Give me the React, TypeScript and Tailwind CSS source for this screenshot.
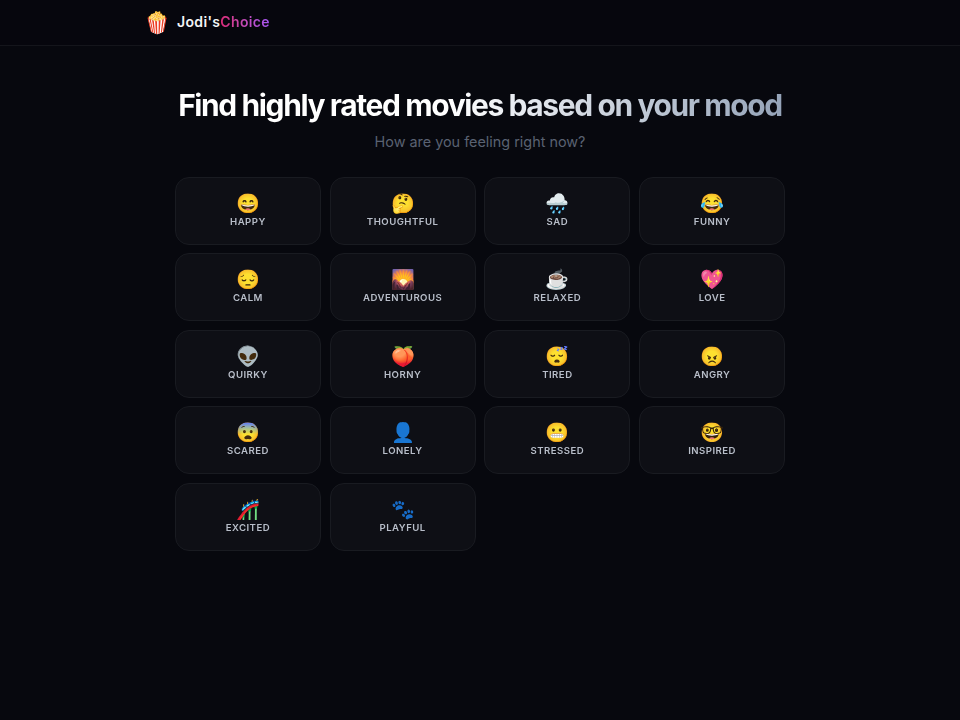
const moods = [
  { emoji: '😄', label: 'Happy' },
  { emoji: '🤔', label: 'Thoughtful' },
  { emoji: '🌧️', label: 'Sad' },
  { emoji: '😂', label: 'Funny' },
  { emoji: '😔', label: 'Calm' },
  { emoji: '🌄', label: 'Adventurous' },
  { emoji: '☕', label: 'Relaxed' },
  { emoji: '💖', label: 'Love' },
  { emoji: '👽', label: 'Quirky' },
  { emoji: '🍑', label: 'Horny' },
  { emoji: '😴', label: 'Tired' },
  { emoji: '😠', label: 'Angry' },
  { emoji: '😨', label: 'Scared' },
  { emoji: '👤', label: 'Lonely' },
  { emoji: '😬', label: 'Stressed' },
  { emoji: '🤓', label: 'Inspired' },
  { emoji: '🎢', label: 'Excited' },
  { emoji: '🐾', label: 'Playful' },
]

export default function App() {
  return (
    <div className="min-h-screen bg-[#07080e] font-['Inter',sans-serif] text-white">
      {/* Header */}
      <header className="h-[46px] border-b border-[#14151b] bg-[#06060d]">
        <div className="mx-auto flex h-full max-w-[672px] items-center gap-[7px] pb-[1px]">
          <span className="text-[21px] leading-none">🍿</span>
          <span className="mb-[2px] text-[14px] font-semibold tracking-wide">
            <span className="text-[#f3f4f6]">Jodi's</span>
            <span className="bg-gradient-to-r from-[#db2777] to-[#a855f7] bg-clip-text text-transparent">Choice</span>
          </span>
        </div>
      </header>

      <main className="mx-auto max-w-[610px] pt-[41px]">
        <h1 className="bg-gradient-to-r from-white from-45% to-[#94a3b8] bg-clip-text text-center text-[30px] leading-[36px] font-bold tracking-[-1.4px] whitespace-nowrap text-transparent">
          Find highly rated movies based on your mood
        </h1>
        <p className="mt-[7px] text-center text-[14.4px] leading-[24px] text-[#5a6272]">How are you feeling right now?</p>

        {/* Mood grid */}
        <div className="mt-[22.9px] grid transform-gpu grid-cols-4 gap-x-[8.9px] gap-y-[8.5px]">
          {moods.map(m => (
            <button
              key={m.label}
              type="button"
              className="flex h-[68px] flex-col items-center justify-center rounded-[14px] border border-[#191b21] bg-[#0e0f15] pb-[3px]"
            >
              <span className="text-[19.2px] leading-[24px]">{m.emoji}</span>
              <span className="mt-px text-[9.6px] leading-[12px] font-semibold tracking-wider text-[#b8bec9] uppercase">{m.label}</span>
            </button>
          ))}
        </div>
      </main>
    </div>
  )
}
